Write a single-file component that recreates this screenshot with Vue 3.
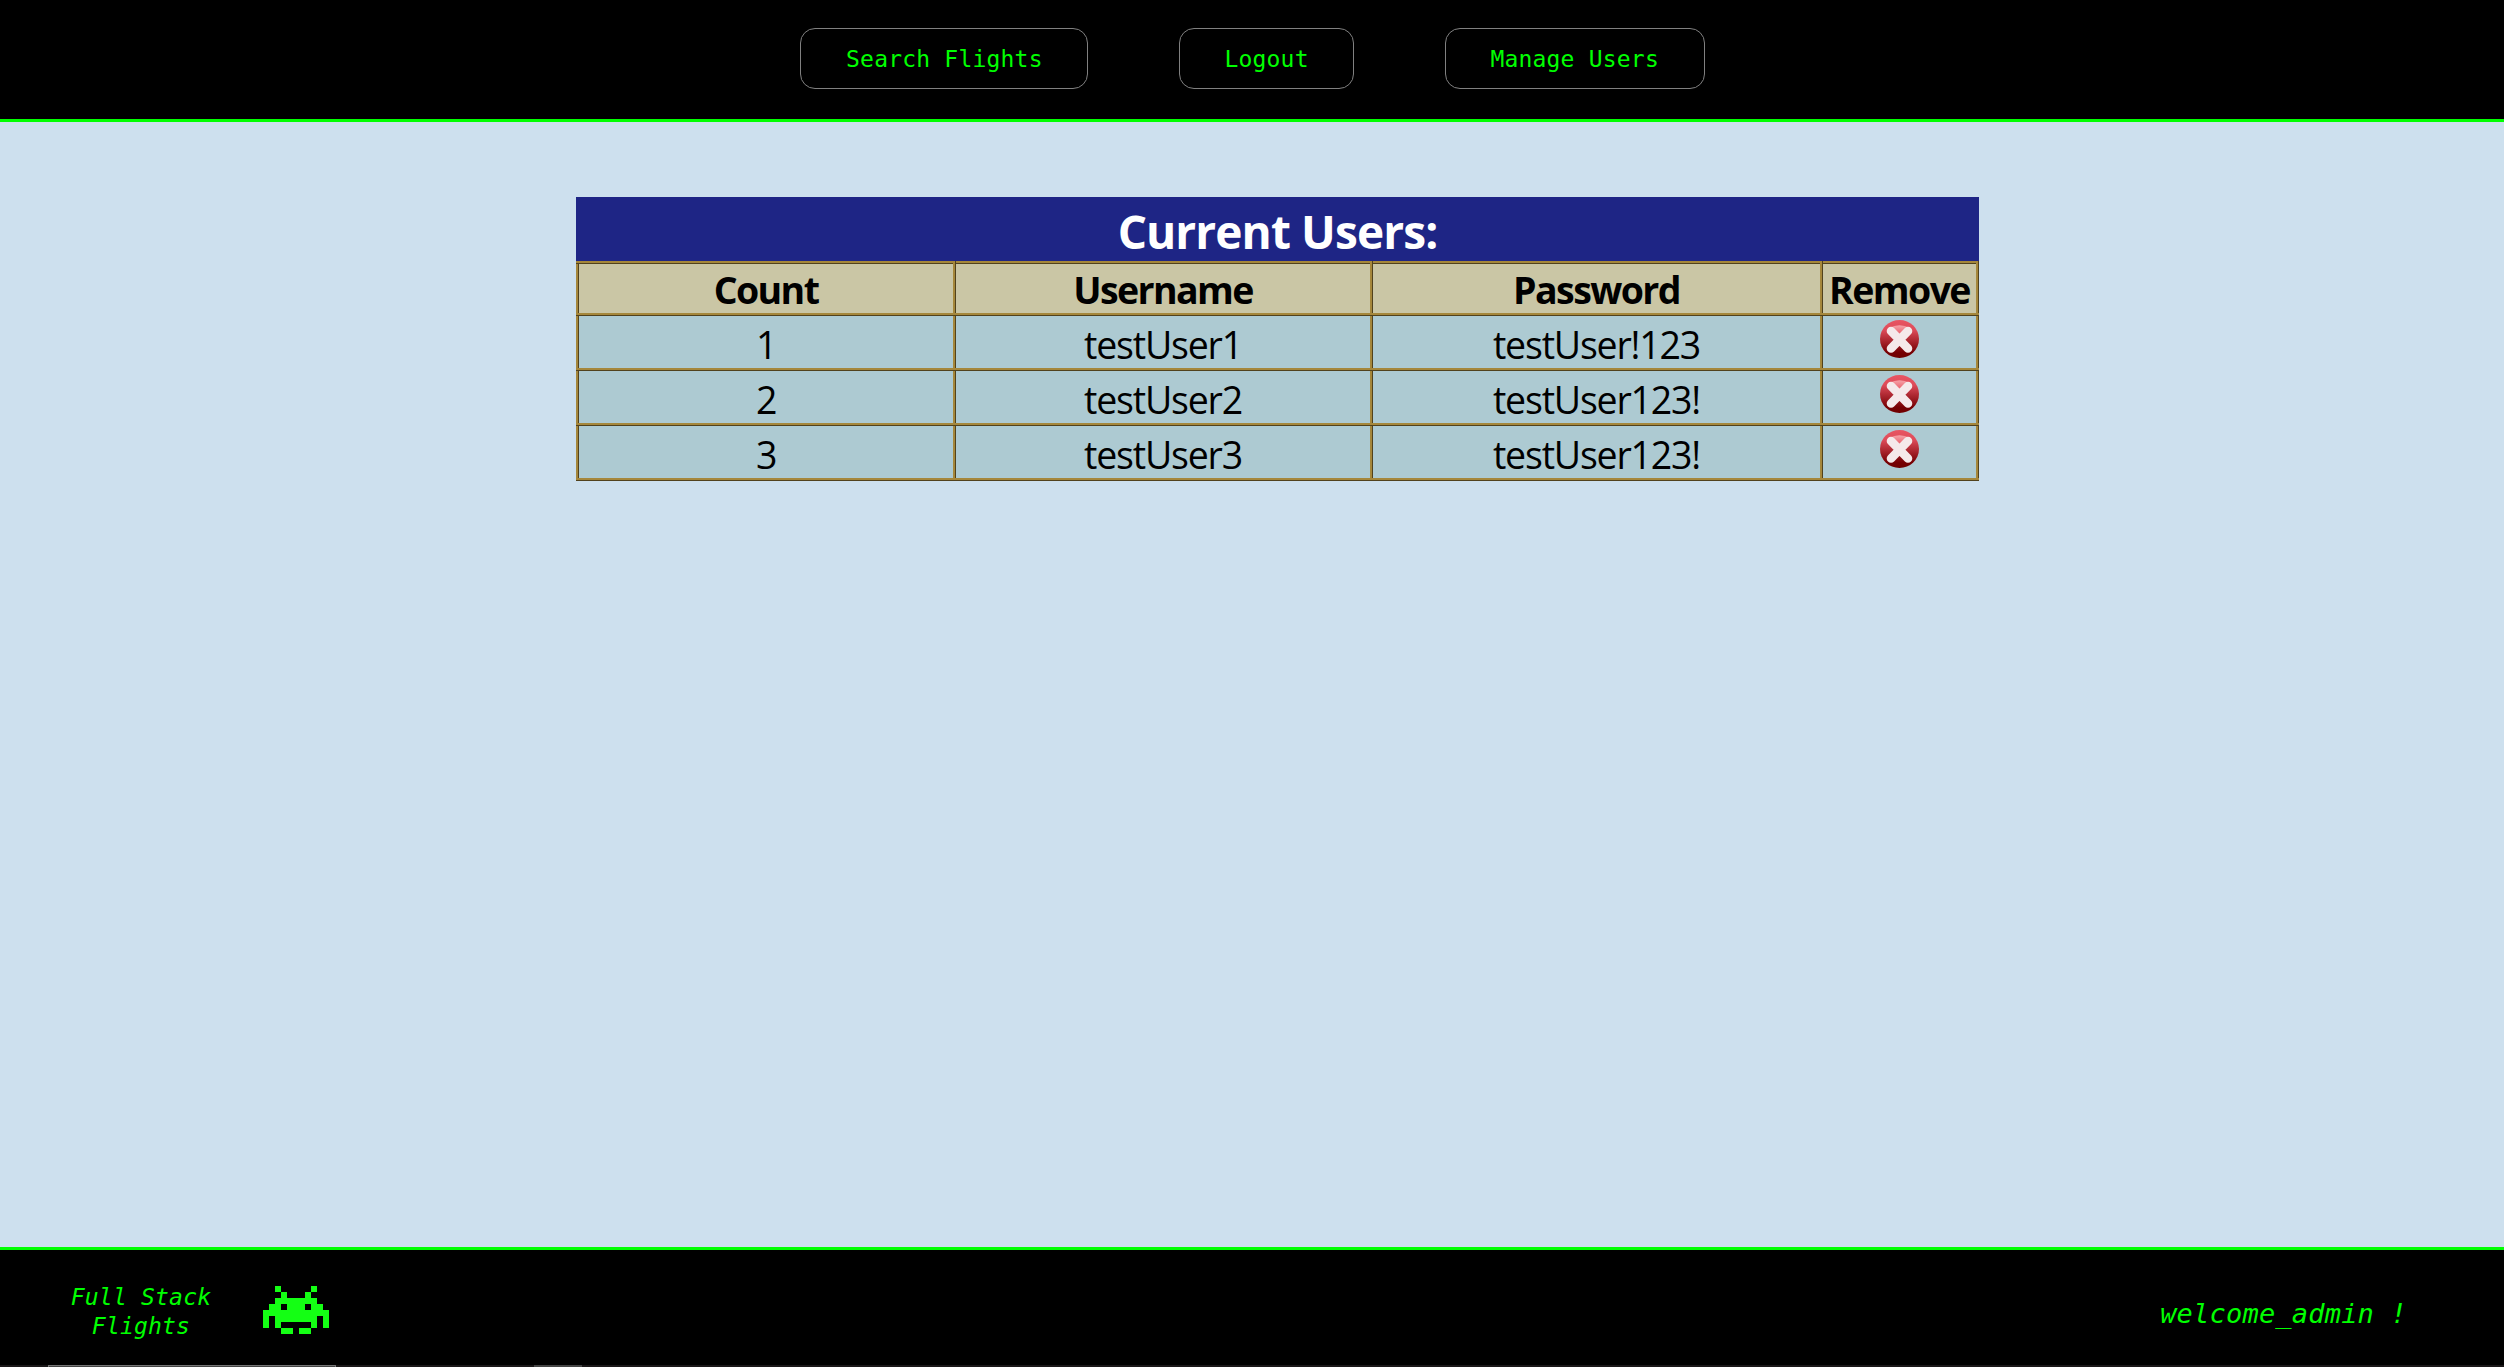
<script setup>
const links = ['Search Flights', 'Logout', 'Manage Users']
const users = [
  { name: 'testUser1', password: 'testUser!123' },
  { name: 'testUser2', password: 'testUser123!' },
  { name: 'testUser3', password: 'testUser123!' },
]
</script>

<template>
  <div class="page">
    <header class="header">
      <nav class="nav">
        <a v-for="link in links" :key="link" class="nav-link">{{ link }}</a>
      </nav>
    </header>

    <main class="main">
      <table class="users">
        <caption><span class="title">Current Users:</span></caption>
        <colgroup>
          <col class="col-count" />
          <col class="col-name" />
          <col class="col-password" />
          <col class="col-remove" />
        </colgroup>
        <thead>
          <tr>
            <th>Count</th>
            <th>Username</th>
            <th>Password</th>
            <th>Remove</th>
          </tr>
        </thead>
        <tbody>
          <tr v-for="(user, i) in users" :key="user.name">
            <td><span class="text">{{ i + 1 }}</span></td>
            <td><span class="text">{{ user.name }}</span></td>
            <td><span class="text">{{ user.password }}</span></td>
            <td>
              <svg class="remove" viewBox="0 0 39 38">
                <defs>
                  <linearGradient id="ball" x1="0" y1="0" x2="0" y2="1">
                    <stop offset="0" stop-color="#e85562" />
                    <stop offset="0.25" stop-color="#df4c5a" />
                    <stop offset="0.85" stop-color="#760003" />
                    <stop offset="1" stop-color="#700000" />
                  </linearGradient>
                  <linearGradient id="shine" x1="0" y1="0" x2="0" y2="1">
                    <stop offset="0" stop-color="#f5a3a9" />
                    <stop offset="1" stop-color="#e8505c" />
                  </linearGradient>
                </defs>
                <ellipse cx="19.5" cy="19" rx="19.5" ry="19" fill="url(#ball)" />
                <path d="M9 8 Q19.5 2.5 30 8 L20 16Z" fill="url(#shine)" />
                <path d="M11 11 28 28.5M28 11 11 28.5" stroke="#f5e9ea" stroke-width="8.6" stroke-linecap="round" />
              </svg>
            </td>
          </tr>
        </tbody>
      </table>
    </main>

    <footer class="footer">
      <div class="brand">Full Stack<br />Flights</div>
      <svg class="invader" viewBox="0 0 11 8" shape-rendering="crispEdges">
        <path
          fill="#14ff14"
          d="M2 0h1v1h-1zM8 0h1v1h-1zM3 1h1v1h-1zM7 1h1v1h-1zM2 2h7v1h1v1h1v3h-1v-2h-1v2h-1v-1h-5v1h-1v-2h-1v2h-1v-3h1v-1h1zM3 3v1h1v-1zM7 3v1h1v-1zM3 7h2v1h-2zM6 7h2v1h-2z"
        />
      </svg>
      <div class="welcome">welcome_admin !</div>
    </footer>
    <div class="taskbar"><span class="task wide"></span><span class="task"></span></div>
  </div>
</template>

<style>
body {
  margin: 0;
}
</style>

<style scoped>
.page {
  display: flex;
  flex-direction: column;
  height: 1367px;
  background: #cde0ee;
  overflow: hidden;
}
.header {
  box-sizing: border-box;
  height: 122px;
  padding-top: 28px;
  background: #000;
  border-bottom: 3px solid #0f0;
}
.nav {
  display: flex;
  justify-content: center;
  gap: 90.5px;
  padding-left: 1px;
}
.nav-link {
  box-sizing: border-box;
  height: 61px;
  padding: 0 44.6px;
  border: 1px solid #808080;
  border-radius: 15px;
  color: #0f0;
  font: 23px/60px "DejaVu Sans Mono", monospace;
  letter-spacing: 0.2px;
}
.main {
  flex: 1;
  padding: 75px 0 0 576px;
}
.users {
  width: 1403px;
  table-layout: fixed;
  border-collapse: collapse;
  font-family: "Open Sans", "Noto Sans", sans-serif;
  font-size: 37.5px;
  text-align: center;
  color: #000;
}
.users caption {
  height: 64px;
  background: #1e2585;
  color: #fff;
  font-size: 46px;
  font-weight: 700;
  line-height: 68px;
  letter-spacing: -0.9px;
}
.title {
  display: block;
  height: 64px;
}
.col-count {
  width: 377px;
}
.col-name {
  width: 417px;
}
.col-password {
  width: 450px;
}
.col-remove {
  width: 156px;
}
th,
td {
  box-sizing: border-box;
  padding: 0;
  border: 3px ridge #a5873b;
  white-space: nowrap;
}
th {
  height: 52px;
  padding-top: 2px;
  line-height: 47px;
  letter-spacing: -1.6px;
  background: #cac6a5;
}
td {
  height: 55px;
  font-weight: 370;
  letter-spacing: -1.2px;
  background: #adcad2;
}
.text {
  display: block;
  height: 52px;
  line-height: 57px;
}
.remove {
  display: block;
  width: 39px;
  height: 38px;
  margin: 4px auto 10px;
}
.footer {
  box-sizing: border-box;
  display: flex;
  height: 118px;
  background: #000;
  border-top: 3px solid #0f0;
  color: #0f0;
  font-family: "DejaVu Sans Mono", monospace;
  font-style: italic;
}
.brand {
  width: 142px;
  margin: 33px 0 0 70px;
  font-size: 23px;
  line-height: 29px;
  letter-spacing: 0.2px;
  text-align: center;
  white-space: nowrap;
}
.invader {
  width: 66px;
  height: 48px;
  margin: 36px 0 0 51px;
}
.welcome {
  margin: 46px 97px 0 auto;
  font-size: 27px;
  line-height: 36px;
  letter-spacing: 0.2px;
}
.taskbar {
  display: flex;
  gap: 198px;
  height: 2px;
  padding-left: 48px;
  background: #1a1718;
}
.task {
  width: 48px;
  background: #444;
}
.wide {
  box-sizing: border-box;
  width: 288px;
  border: 1px solid #757575;
  border-bottom: 0;
}
</style>
